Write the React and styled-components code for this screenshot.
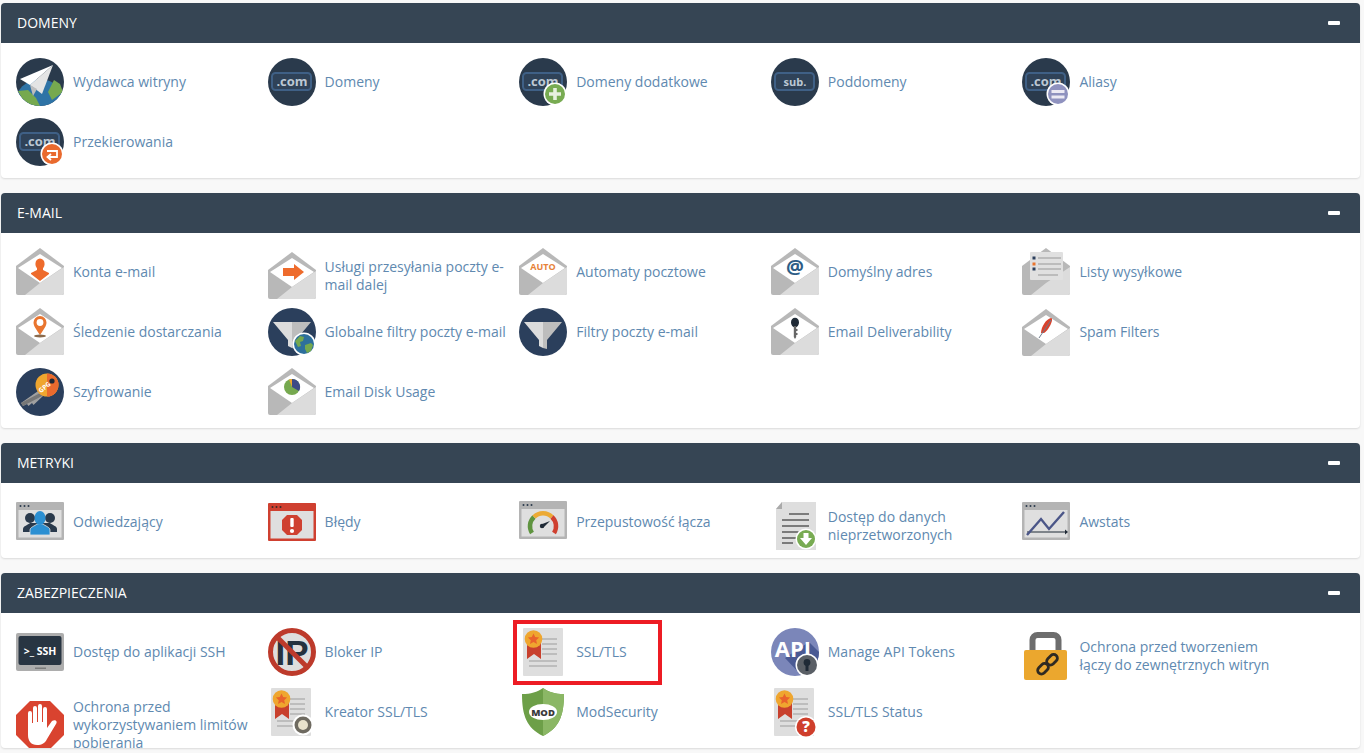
import styled, { createGlobalStyle } from "styled-components";

const GlobalStyle = createGlobalStyle`
  html, body {
    margin: 0;
    height: 100%;
    overflow: hidden;
    background: #f8f8f8;
  }
  body {
    font-family: "Open Sans", "Liberation Sans", sans-serif;
  }
`;

const Page = styled.div`
  display: flex;
  flex-direction: column;
  gap: 15px;
  padding: 3px 4px 5px 1px;
`;

const Panel = styled.section`
  background: #fff;
  border-radius: 4px;
  box-shadow: 0 1px 2px rgba(0, 0, 0, 0.12);
  overflow: hidden;
`;

const Header = styled.header`
  display: flex;
  align-items: center;
  justify-content: space-between;
  height: 40px;
  padding: 0 20px 0 16px;
  background: #364554;
  color: #fff;
  font-size: 14px;
`;

const Title = styled.span`
  margin-bottom: 2px;
`;

const Collapse = styled.span`
  width: 12px;
  height: 4px;
  border-radius: 1px;
  background: #fff;
`;

const Body = styled.div`
  display: grid;
  grid-template-columns: repeat(5, 251.6px);
  grid-auto-rows: 60px;
  padding: 9px 0 6px 15px;
`;

const Item = styled.a`
  position: relative;
  display: flex;
  align-items: center;
  gap: 9px;
  height: 48px;
  margin-top: 6px;
  color: #6089b0;
  font-size: 14px;
  line-height: 18px;
`;

const IconBox = styled.span`
  flex: none;
  width: 48px;
  height: 48px;
  svg {
    display: block;
    overflow: visible;
  }
`;

const Label = styled.span`
  width: 194px;
  align-self: ${(props) => (props.$wrapped ? "flex-start" : "center")};
  margin-top: ${(props) => (props.$wrapped ? "10px" : "0")};
`;

const Highlight = styled.span`
  position: absolute;
  left: -6px;
  top: -8px;
  width: 149px;
  height: 65px;
  box-sizing: border-box;
  border: 4px solid #ed1c24;
`;

const Svg = ({ children }) => (
  <svg width="48" height="48" viewBox="0 0 48 48">
    {children}
  </svg>
);

const NAVY = "#2a3a4c";

const Badge = ({ color, children, cx = 36, cy = 36, r = 10 }) => (
  <g>
    <circle cx={cx} cy={cy} r={r + 1.5} fill="#fff" />
    <circle cx={cx} cy={cy} r={r} fill={color} />
    {children}
  </g>
);

const Tag = ({ text, size = 13 }) => (
  <g>
    <circle cx="24" cy="24" r="24" fill={NAVY} />
    <rect x="4" y="15" width="39" height="17" rx="3.5" fill="#2f4258" stroke="#3f6086" strokeWidth="2" />
    <text x="24" y="28" textAnchor="middle" fontFamily="Open Sans" fontWeight="700" fontSize={size} fill="#bcc8d4">
      {text}
    </text>
  </g>
);

const Globe = ({ cx = 36, cy = 36, r = 10 }) => (
  <g>
    <circle cx={cx} cy={cy} r={r + 1.5} fill="#fff" />
    <circle cx={cx} cy={cy} r={r} fill="#2d6f9c" />
    <path
      d={`M${cx - 9} ${cy - 3}l5 -5 4 1 -1 4 -3 1 1 4 -3 1z M${cx + 1} ${cy + 1}l6 -2 2 2 -2 6 -4 2 -2 -4z`}
      fill="#74a84e"
    />
  </g>
);

const Envelope = ({ children, dy = 0 }) => (
  <g transform={`translate(0 ${dy})`}>
    <path d="M0 18L24 0L48 18V45a2 2 0 0 1-2 2H2a2 2 0 0 1-2-2Z" fill="#b8b8b8" />
    <path d="M2 20L24 6L46 20L24 35Z" fill="#fff" />
    <path d="M48 19V45a2 2 0 0 1-2 2H9L24 35Z" fill="#dcdcdc" />
    {children}
  </g>
);

const Funnel = () => (
  <g>
    <circle cx="24" cy="24" r="24" fill="#2b3f5c" />
    <path d="M5 14H24V40L20 38V32Z" fill="#dcdcdc" />
    <path d="M24 14H43L28 32V41L24 40Z" fill="#bdbdbd" />
  </g>
);

const Browser = ({ frame = "#b4b4b4", dots = "#2a3a4c", children, dy = 4 }) => (
  <g transform={`translate(0 ${dy})`}>
    <rect x="0" y="0" width="48" height="38" rx="1" fill={frame} />
    <rect x="2.5" y="8" width="43" height="27.5" fill="#dfdfdf" />
    <circle cx="4.5" cy="4" r="1" fill={dots} />
    <circle cx="8.5" cy="4" r="1" fill={dots} />
    <circle cx="12.5" cy="4" r="1" fill={dots} />
    {children}
  </g>
);

const Certificate = ({ x = 0, children }) => (
  <g transform={`translate(${x} 0)`}>
    <rect width="40" height="48" rx="1" fill="#dedede" />
    <path d="M19 11H34M19 16H34M19 21H34M19 26H34M6 33H34M6 38H34" stroke="#b3b3b3" strokeWidth="1.6" />
    <path d="M4 15H18V31L11 26L4 31Z" fill="#c8402d" />
    <circle cx="10.5" cy="11" r="8.8" fill="#efa62f" />
    <path d="M10.5 5.5l1.7 3.6 3.9.4-2.9 2.7.8 3.9-3.5-2-3.5 2 .8-3.9-2.9-2.7 3.9-.4z" fill="#e9632c" />
    {children}
  </g>
);

const icons = {
  publisher: (
    <Svg>
      <defs>
        <clipPath id="planet">
          <circle cx="24" cy="24" r="24" />
        </clipPath>
      </defs>
      <circle cx="24" cy="24" r="24" fill={NAVY} />
      <g clipPath="url(#planet)">
        <circle cx="24" cy="46" r="25" fill="#2e73a6" />
        <path d="M2 33L12 32L20 40L24 48H10Z" fill="#76a94f" />
        <path d="M38 22L44 26L47 34L36 42L32 34Z" fill="#76a94f" />
      </g>
      <path d="M37 7L4 21L14 27Z" fill="#fff" />
      <path d="M37 7L14 27L26 36Z" fill="#e4e4e4" />
      <path d="M14 27L17 38L21 31Z" fill="#bdbdbd" />
    </Svg>
  ),
  com: (
    <Svg>
      <Tag text=".com" />
    </Svg>
  ),
  comPlus: (
    <Svg>
      <Tag text=".com" />
      <Badge color="#78ab52">
        <path d="M36 30V42M30 36H42" stroke="#e8f0df" strokeWidth="3.6" />
      </Badge>
    </Svg>
  ),
  sub: (
    <Svg>
      <Tag text="sub." size={11} />
    </Svg>
  ),
  comEqual: (
    <Svg>
      <Tag text=".com" />
      <Badge color="#8f92bf">
        <path d="M29.5 33.5H42.5M29.5 39H42.5" stroke="#eceaf4" strokeWidth="3" />
      </Badge>
    </Svg>
  ),
  comRedirect: (
    <Svg>
      <Tag text=".com" />
      <Badge color="#e96a2e">
        <path d="M31 33H41V39H32M35 36L31.5 39L35 42" fill="none" stroke="#fff" strokeWidth="1.8" />
      </Badge>
    </Svg>
  ),
  mailUser: (
    <Svg>
      <Envelope>
        <ellipse cx="24" cy="16" rx="4.6" ry="5.6" fill="#ee6b2c" />
        <path d="M21 20H27V22L33 25V26L24 33L15 26V25L21 22Z" fill="#ee6b2c" />
      </Envelope>
    </Svg>
  ),
  mailForward: (
    <Svg>
      <Envelope dy={4}>
        <path d="M15 16H26V12L36 20L26 28V24H15Z" fill="#ee6b2c" />
      </Envelope>
    </Svg>
  ),
  mailAuto: (
    <Svg>
      <Envelope>
        <text x="24" y="22" textAnchor="middle" fontFamily="Open Sans" fontWeight="700" fontSize="9" fill="#e6823a">
          AUTO
        </text>
      </Envelope>
    </Svg>
  ),
  mailAt: (
    <Svg>
      <Envelope>
        <text x="24" y="26" textAnchor="middle" fontFamily="Open Sans" fontWeight="700" fontSize="20" fill="#2c5d86">
          @
        </text>
      </Envelope>
    </Svg>
  ),
  mailList: (
    <Svg>
      <path d="M0 18L24 0L48 18V45a2 2 0 0 1-2 2H2a2 2 0 0 1-2-2Z" fill="#b8b8b8" />
      <path d="M48 19V45a2 2 0 0 1-2 2H9L24 35Z" fill="#dcdcdc" />
      <rect x="8" y="4" width="33" height="28" rx="1" fill="#e0e0e0" />
      <path d="M16 10H39M16 16H39M16 21H39M16 27H36" stroke="#b0b0b0" strokeWidth="1.6" />
      <rect x="10.500" y="8.500" width="3" height="3" fill="#2b3f5c" />
      <rect x="10.500" y="14.500" width="3" height="3" fill="#e9752f" />
      <rect x="10.500" y="19.500" width="3" height="3" fill="#2b3f5c" />
    </Svg>
  ),
  mailTrack: (
    <Svg>
      <Envelope>
        <path d="M24 27C20 21 17.5 18 17.5 14.500a6.500 6.500 0 0 1 13 0C30.500 18 28 21 24 27Z" fill="#e9752f" />
        <circle cx="24" cy="14.500" r="3.400" fill="#fff" />
        <ellipse cx="24" cy="28" rx="6" ry="1.400" fill="#8a6a4c" />
      </Envelope>
    </Svg>
  ),
  funnelGlobe: (
    <Svg>
      <Funnel />
      <Globe />
    </Svg>
  ),
  funnel: (
    <Svg>
      <Funnel />
    </Svg>
  ),
  mailKey: (
    <Svg>
      <Envelope>
        <ellipse cx="24" cy="14.500" rx="4" ry="4.800" fill="#1f2a36" />
        <path d="M22.800 18H25.200V21H26.500V23H25.200V25H26.500V27H25.200V29L24 31L22.800 29Z" fill="#666" />
      </Envelope>
    </Svg>
  ),
  mailFeather: (
    <Svg>
      <Envelope dy={1}>
        <path d="M29 9C32 9 28 20 22 24L19 24C19 18 24 10 29 9Z" fill="#d9422c" />
        <path d="M29 11L17 29" stroke="#6c7a8c" strokeWidth="1" />
      </Envelope>
    </Svg>
  ),
  key: (
    <Svg>
      <circle cx="24" cy="24" r="24" fill="#2b3f5c" />
      <path d="M25 21L5 35L7 38L11 36L12.500 38L16 35L17.500 37L28 27Z" fill="#a0a0a0" />
      <path d="M28 27L7 38L5 35L26 24Z" fill="#777" />
      <circle cx="31" cy="17" r="11.500" fill="#efa62f" />
      <path d="M31 5.500a11.500 11.500 0 0 1 0 23Z" fill="#e96a2e" />
      <circle cx="36" cy="13" r="2.600" fill="#1f2a36" />
      <text x="30" y="21" textAnchor="middle" transform="rotate(-38 30 21)" fontFamily="Open Sans" fontWeight="700" fontSize="6.500" fill="#fff">
        GPG
      </text>
    </Svg>
  ),
  mailPie: (
    <Svg>
      <Envelope>
        <circle cx="24" cy="19" r="8" fill="#76a94f" />
        <path d="M24 19V11A8 8 0 0 1 31 23Z" fill="#3d4a86" />
        <path d="M24 19V11A8 8 0 0 0 21 11.500Z" fill="#efa62f" />
      </Envelope>
    </Svg>
  ),
  visitors: (
    <Svg>
      <Browser>
        <path d="M7 30V27C7 24 12 23 14 21L34 21C36 23 41 24 41 27V30Z" fill="#2a3a4c" />
        <circle cx="14" cy="16" r="5" fill="#2a3a4c" />
        <circle cx="34" cy="16" r="5" fill="#2a3a4c" />
        <path d="M14 33V28C14 25 19 24 21 22H27C29 24 34 25 34 28V33Z" fill="#2b8fd2" stroke="#dfdfdf" strokeWidth="0.800" />
        <ellipse cx="24" cy="16" rx="5.500" ry="7" fill="#2b8fd2" />
      </Browser>
    </Svg>
  ),
  errors: (
    <Svg>
      <Browser frame="#cf4030" dots="#3a2a28" dy={5}>
        <path d="M19 12H29L34 17V27L29 32H19L14 27V17Z" fill="#cf4030" />
        <rect x="22.300" y="15" width="3.400" height="9" rx="1" fill="#fff" />
        <circle cx="24" cy="28" r="2.100" fill="#fff" />
      </Browser>
    </Svg>
  ),
  gauge: (
    <Svg>
      <Browser dy={3}>
        <path d="M13 32A12.500 12.500 0 0 1 15 16" fill="none" stroke="#5f9440" strokeWidth="4.500" />
        <path d="M15 16A12.500 12.500 0 0 1 33 16" fill="none" stroke="#ecaa35" strokeWidth="4.500" />
        <path d="M33 16A12.500 12.500 0 0 1 35 32" fill="none" stroke="#cf4030" strokeWidth="4.500" />
        <circle cx="23" cy="25" r="2.200" fill="#1f2a36" />
        <path d="M22 23.500L31 20L24 27Z" fill="#1f2a36" />
      </Browser>
    </Svg>
  ),
  rawData: (
    <Svg>
      <g transform="translate(4 4)">
        <path d="M7 0H41V48H1V7Z" fill="#dedede" />
        <path d="M7 0V7H1Z" fill="#aaa" />
        <path d="M14 12H34M7 18H34M7 24H34M7 30H34M7 36H22M7 41H18" stroke="#7b7b7b" strokeWidth="2" />
        <Badge color="#78ab52" cx={31} cy={37} r={9}>
          <path d="M28.500 31H33.500V36H37L31 43L25 36H28.500Z" fill="#fff" />
        </Badge>
      </g>
    </Svg>
  ),
  awstats: (
    <Svg>
      <Browser>
        <path d="M5 30H43" stroke="#1f2a36" strokeWidth="1.200" />
        <path d="M43 27.500L46 30L43 32.500Z" fill="#1f2a36" />
        <path d="M5 33L19 17L27 27L42 10" fill="none" stroke="#4b5688" strokeWidth="2.400" />
      </Browser>
    </Svg>
  ),
  ssh: (
    <Svg>
      <g transform="translate(0 5)">
        <rect width="48" height="38" rx="2" fill="#adadad" />
        <rect x="2.500" y="3" width="43" height="29" rx="2" fill="#283542" />
        <rect x="19" y="34.500" width="11" height="1.500" fill="#7c7c7c" />
        <text x="24" y="21.500" textAnchor="middle" fontFamily="Open Sans" fontWeight="700" fontSize="10.500" fill="#fff">
          {">_ SSH"}
        </text>
      </g>
    </Svg>
  ),
  ipBlock: (
    <Svg>
      <circle cx="24" cy="24" r="21.500" fill="#dedede" stroke="#bd3a2b" strokeWidth="5" />
      <text x="24" y="37" textAnchor="middle" fontFamily="Liberation Sans" fontWeight="700" fontSize="35" fill="#25323f">
        IP
      </text>
      <path d="M9 9L39 39" stroke="#bd3a2b" strokeWidth="5" />
    </Svg>
  ),
  hand: (
    <Svg>
      <g transform="translate(0 13)">
        <path d="M14 0H34L48 14V34L34 48H14L0 34V14Z" fill="#d9432f" />
        <path
          d="M12 12a2 2 0 0 1 4 0V22H17V7a2 2 0 0 1 4 0V21H22V5a2 2 0 0 1 4 0V21H27V8a2 2 0 0 1 4 0V27L36 20C39 18 42 20 40 23L31 38C29 42 26 44 21 44C15 44 12 40 12 34Z"
          fill="#fff"
        />
      </g>
    </Svg>
  ),
  sslWizard: (
    <Svg>
      <Certificate x={3}>
        <circle cx="32" cy="37" r="10.500" fill="#fff" />
        <circle cx="32" cy="37" r="8.500" fill="#6e6a60" />
        <circle cx="32" cy="37" r="5" fill="#e8e2cc" />
      </Certificate>
    </Svg>
  ),
  ssl: (
    <Svg>
      <Certificate x={4} />
    </Svg>
  ),
  shield: (
    <Svg>
      <path d="M24 0C30 4 36 6 45 6C45 28 40 40 24 48C8 40 3 28 3 6C12 6 18 4 24 0Z" fill="#6d9f48" />
      <path d="M24 0C30 4 36 6 45 6C45 28 40 40 24 48Z" fill="#8bb765" />
      <ellipse cx="24" cy="24" rx="14" ry="8" fill="#fff" />
      <text x="24" y="27.500" textAnchor="middle" fontFamily="Open Sans" fontWeight="800" fontSize="9.500" fill="#3a3a3a">
        MOD
      </text>
    </Svg>
  ),
  api: (
    <Svg>
      <circle cx="24" cy="24" r="24" fill="#7b86b9" />
      <path d="M14 30L38 14L48 24A24 24 0 0 1 30 47Z" fill="#4a5a94" />
      <text x="22" y="29" textAnchor="middle" fontFamily="Open Sans" fontWeight="700" fontSize="22" fill="#fff">
        API
      </text>
      <Badge color="#5a5f66" cx={36} cy={37} r={10}>
        <circle cx="36" cy="34.500" r="3.400" fill="#1f2a36" />
        <path d="M34.500 36H37.500V43H34.500Z" fill="#1f2a36" />
      </Badge>
    </Svg>
  ),
  lock: (
    <Svg>
      <path d="M10.500 24V9a5 5 0 0 1 5-5H31.500a5 5 0 0 1 5 5V24" transform="translate(0 3)" fill="none" stroke="#6d6d6d" strokeWidth="6" />
      <rect x="2" y="22" width="43" height="30" rx="2" fill="#eba72e" />
      <g fill="none" stroke="#2f2a22" strokeWidth="2.800" transform="translate(1 1)">
        <rect x="23" y="27" width="12" height="7.500" rx="3.700" transform="rotate(-45 29 30.700)" />
        <rect x="14" y="36" width="12" height="7.500" rx="3.700" transform="rotate(-45 20 39.700)" />
      </g>
    </Svg>
  ),
  sslStatus: (
    <Svg>
      <Certificate x={3}>
        <Badge color="#cf3f2c" cx={32} cy={39} r={9.500}>
          <text x="32" y="44" textAnchor="middle" fontFamily="Open Sans" fontWeight="800" fontSize="15" fill="#fff">
            ?
          </text>
        </Badge>
      </Certificate>
    </Svg>
  ),
};

const sections = [
  {
    title: "Domeny",
    items: [
      { icon: "publisher", text: "Wydawca witryny" },
      { icon: "com", text: "Domeny" },
      { icon: "comPlus", text: "Domeny dodatkowe" },
      { icon: "sub", text: "Poddomeny" },
      { icon: "comEqual", text: "Aliasy" },
      { icon: "comRedirect", text: "Przekierowania" },
    ],
  },
  {
    title: "E-mail",
    items: [
      { icon: "mailUser", text: "Konta e-mail" },
      { icon: "mailForward", text: "Usługi przesyłania poczty e-mail dalej", wrapped: true },
      { icon: "mailAuto", text: "Automaty pocztowe" },
      { icon: "mailAt", text: "Domyślny adres" },
      { icon: "mailList", text: "Listy wysyłkowe" },
      { icon: "mailTrack", text: "Śledzenie dostarczania" },
      { icon: "funnelGlobe", text: "Globalne filtry poczty e-mail" },
      { icon: "funnel", text: "Filtry poczty e-mail" },
      { icon: "mailKey", text: "Email Deliverability" },
      { icon: "mailFeather", text: "Spam Filters" },
      { icon: "key", text: "Szyfrowanie" },
      { icon: "mailPie", text: "Email Disk Usage" },
    ],
  },
  {
    title: "Metryki",
    items: [
      { icon: "visitors", text: "Odwiedzający" },
      { icon: "errors", text: "Błędy" },
      { icon: "gauge", text: "Przepustowość łącza" },
      { icon: "rawData", text: "Dostęp do danych nieprzetworzonych", wrapped: true },
      { icon: "awstats", text: "Awstats" },
    ],
  },
  {
    title: "Zabezpieczenia",
    items: [
      { icon: "ssh", text: "Dostęp do aplikacji SSH" },
      { icon: "ipBlock", text: "Bloker IP" },
      { icon: "ssl", text: "SSL/TLS", marked: true },
      { icon: "api", text: "Manage API Tokens" },
      { icon: "lock", text: "Ochrona przed tworzeniem łączy do zewnętrznych witryn", wrapped: true },
      { icon: "hand", text: "Ochrona przed wykorzystywaniem limitów pobierania", wrapped: true },
      { icon: "sslWizard", text: "Kreator SSL/TLS" },
      { icon: "shield", text: "ModSecurity" },
      { icon: "sslStatus", text: "SSL/TLS Status" },
    ],
  },
];

const App = () => (
  <Page>
    <GlobalStyle />
    {sections.map((section) => (
      <Panel key={section.title}>
        <Header>
          <Title>{section.title.toUpperCase()}</Title>
          <Collapse />
        </Header>
        <Body>
          {section.items.map((item) => (
            <Item key={item.text}>
              <IconBox>{icons[item.icon]}</IconBox>
              <Label $wrapped={item.wrapped}>{item.text}</Label>
              {item.marked && <Highlight />}
            </Item>
          ))}
        </Body>
      </Panel>
    ))}
  </Page>
);

export default App;
